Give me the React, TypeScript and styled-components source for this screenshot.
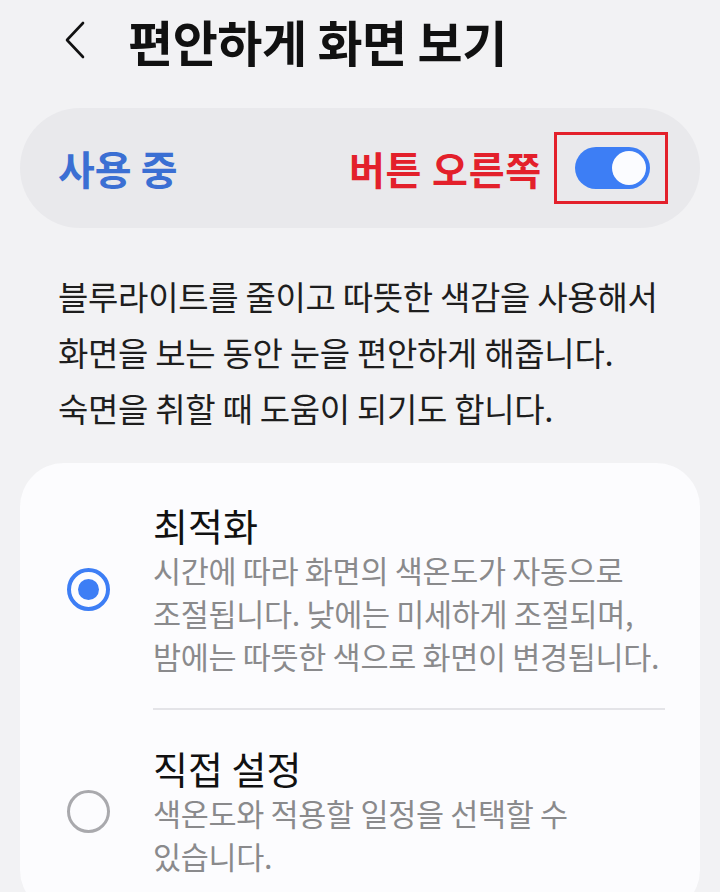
import styled, { createGlobalStyle } from 'styled-components'

const GlobalStyle = createGlobalStyle`
  html, body {
    margin: 0;
    padding: 0;
    background: #f2f2f4;
  }
  body {
    font-family: 'Noto Sans CJK KR', 'Noto Sans', sans-serif;
    color: #1c1c1c;
    overflow: hidden;
  }
`

const Page = styled.div`
  padding: 0 20px;
  display: flex;
  flex-direction: column;
`

const Header = styled.header`
  height: 80px;
  display: flex;
  align-items: center;
  padding-left: 42px;
  gap: 40px;
`

const BackButton = styled.button`
  background: transparent;
  border: none;
  padding: 0;
  width: 26px;
  height: 40px;
  display: flex;
  align-items: center;
  justify-content: center;
  cursor: pointer;
`

const Title = styled.h1`
  margin: 0;
  font-size: 49px;
  font-weight: 700;
  letter-spacing: -0.4px;
  color: #111;
`

const MasterBar = styled.div`
  margin-top: 28px;
  height: 120px;
  border-radius: 60px;
  background: #e9e9ec;
  display: flex;
  align-items: center;
  justify-content: space-between;
  padding: 0 32px 0 38px;
`

const MasterLabel = styled.span`
  font-size: 40px;
  font-weight: 700;
  color: #3b6fd3;
`

const MasterRight = styled.div`
  display: flex;
  align-items: center;
  gap: 12px;
`

const Annotation = styled.span`
  font-size: 39px;
  font-weight: 700;
  color: #e3202b;
  letter-spacing: 0.8px;
`

const Highlight = styled.div`
  border: 3px solid #e3202b;
  padding: 12px 15px 12px 18px;
  display: flex;
`

const Track = styled.div<{ $on: boolean }>`
  width: 75px;
  height: 42px;
  border-radius: 21px;
  background: ${(p) => (p.$on ? '#3d7ef5' : '#b8b8bc')};
  display: flex;
  align-items: center;
  justify-content: ${(p) => (p.$on ? 'flex-end' : 'flex-start')};
  padding: 0 4px;
  box-sizing: border-box;
`

const Knob = styled.div`
  width: 34px;
  height: 34px;
  border-radius: 50%;
  background: #fbfcff;
`

const Intro = styled.p`
  margin: 40px 0 0;
  padding-left: 38px;
  font-size: 33px;
  line-height: 56px;
  color: #1e1e1e;
  letter-spacing: -0.3px;
`

const Card = styled.section`
  margin-top: 27px;
  background: #fcfcfe;
  border-radius: 44px;
  padding: 0 35px 20px 47px;
`

const OptionRow = styled.div<{ $top: number; $bottom: number }>`
  display: flex;
  align-items: center;
  gap: 43px;
  padding-top: ${(p) => p.$top}px;
  padding-bottom: ${(p) => p.$bottom}px;
`

const Radio = styled.div<{ $checked: boolean }>`
  flex: none;
  width: 43px;
  height: 43px;
  border-radius: 50%;
  box-sizing: border-box;
  border: ${(p) => (p.$checked ? '4px solid #3d7ef5' : '3px solid #a9a9ad')};
  display: flex;
  align-items: center;
  justify-content: center;

  &::after {
    content: '';
    display: ${(p) => (p.$checked ? 'block' : 'none')};
    width: 21px;
    height: 21px;
    border-radius: 50%;
    background: #3d7ef5;
  }
`

const OptionText = styled.div`
  display: flex;
  flex-direction: column;
`

const OptionTitle = styled.div`
  font-size: 38px;
  line-height: 48px;
  font-weight: 400;
  color: #111;
`

const OptionDesc = styled.div`
  font-size: 30.5px;
  line-height: 43px;
  color: #8a8a8c;
  letter-spacing: -0.3px;
`

const Divider = styled.div`
  height: 2px;
  background: #e4e4e8;
  margin: 0 0 0 86px;
`

const Chevron = () => (
  <svg width='24' height='40' viewBox='0 0 24 40' fill='none'>
    <path
      d='M20 3 L4 20 L20 37'
      stroke='#111'
      strokeWidth='2.6'
      strokeLinecap='round'
      strokeLinejoin='round'
    />
  </svg>
)

export default function App() {
  return (
    <>
      <GlobalStyle />
      <Page>
        <Header>
          <BackButton aria-label='뒤로'>
            <Chevron />
          </BackButton>
          <Title>편안하게 화면 보기</Title>
        </Header>

        <MasterBar>
          <MasterLabel>사용 중</MasterLabel>
          <MasterRight>
            <Annotation>버튼 오른쪽</Annotation>
            <Highlight>
              <Track $on>
                <Knob />
              </Track>
            </Highlight>
          </MasterRight>
        </MasterBar>

        <Intro>
          블루라이트를 줄이고 따뜻한 색감을 사용해서
          <br />
          화면을 보는 동안 눈을 편안하게 해줍니다.
          <br />
          숙면을 취할 때 도움이 되기도 합니다.
        </Intro>

        <Card>
          <OptionRow $top={38} $bottom={30}>
            <Radio $checked />
            <OptionText>
              <OptionTitle>최적화</OptionTitle>
              <OptionDesc>
                시간에 따라 화면의 색온도가 자동으로
                <br />
                조절됩니다. 낮에는 미세하게 조절되며,
                <br />
                밤에는 따뜻한 색으로 화면이 변경됩니다.
              </OptionDesc>
            </OptionText>
          </OptionRow>
          <Divider />
          <OptionRow $top={34} $bottom={16}>
            <Radio $checked={false} />
            <OptionText>
              <OptionTitle>직접 설정</OptionTitle>
              <OptionDesc>
                색온도와 적용할 일정을 선택할 수
                <br />
                있습니다.
              </OptionDesc>
            </OptionText>
          </OptionRow>
        </Card>
      </Page>
    </>
  )
}
